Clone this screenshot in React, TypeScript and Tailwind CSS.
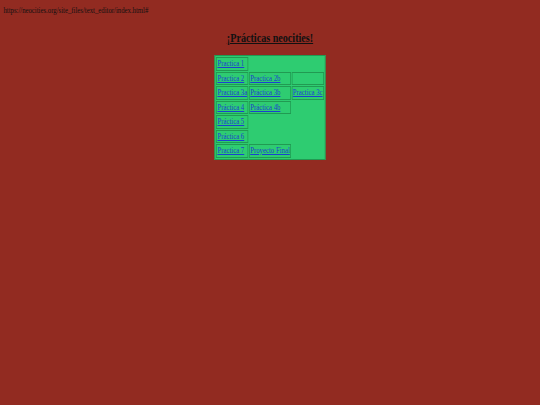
import React from "react";

const rows: string[][] = [
  ["Practica 1"],
  ["Practica 2", "Practica 2b", ""],
  ["Practica 3a", "Práctica 3b", "Practica 3c"],
  ["Práctica 4", "Práctica 4b"],
  ["Práctica 5"],
  ["Práctica 6"],
  ["Practica 7", "Proyecto Final"],
];

export default function App() {
  return (
    <div className="w-[540px] h-[405px] overflow-hidden bg-[#922b21] font-['Liberation_Serif',serif]">
      <div className="w-[720px] origin-top-left scale-x-75 px-[4.5px] pt-[4.5px]">
        <p className="text-[9px] leading-[10.5px] text-[#111]">
          https://neocities.org/site_files/text_editor/index.html#
        </p>
        <h1 className="mt-[14.5px] text-center text-[13.5px] leading-[15.5px] font-bold underline text-[#111]">
          ¡Prácticas neocities!
        </h1>
        <table className="mx-auto mt-[10px] border-separate border-spacing-[1px] border border-[#219a52] bg-[#2ecc71]">
          <tbody>
            {rows.map((r, i) => (
              <tr key={i}>
                {r.map((c, j) => (
                  <td
                    key={j}
                    className="border border-[#219a52] px-[0.5px] py-0 text-[9px] leading-[11.5px] whitespace-nowrap"
                  >
                    {c && (
                      <a href="#" className="text-[#1d3fd0] underline">
                        {c}
                      </a>
                    )}
                  </td>
                ))}
              </tr>
            ))}
          </tbody>
        </table>
      </div>
    </div>
  );
}
